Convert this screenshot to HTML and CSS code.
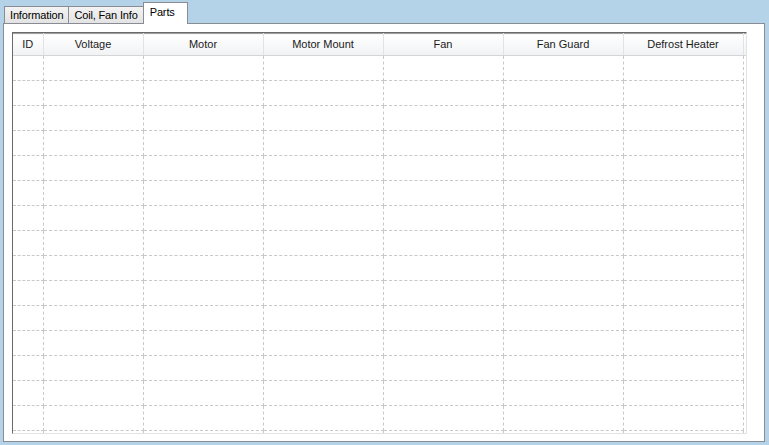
FILE: index.html
```html
<!DOCTYPE html>
<html>
<head>
<meta charset="utf-8">
<link rel="stylesheet" href="styles.css">
</head>
<body>
<div class="window">
  <div class="tabs">
    <div class="tab">Information</div>
    <div class="tab">Coil, Fan Info</div>
    <div class="tab active">Parts</div>
  </div>
  <div class="panel">
    <div class="grid">
      <table>
        <colgroup>
          <col class="c-id"><col class="c-volt"><col class="c-w"><col class="c-w"><col class="c-w"><col class="c-w"><col class="c-w"><col>
        </colgroup>
        <thead>
          <tr>
            <th>ID</th><th>Voltage</th><th>Motor</th><th>Motor Mount</th><th>Fan</th><th>Fan Guard</th><th>Defrost Heater</th><th class="filler"></th>
          </tr>
        </thead>
        <tbody id="rows"></tbody>
      </table>
    </div>
  </div>
</div>
<script>
  var tb = document.getElementById('rows');
  for (var i = 0; i < 16; i++) {
    var tr = document.createElement('tr');
    for (var j = 0; j < 7; j++) tr.appendChild(document.createElement('td'));
    var f = document.createElement('td'); f.className = 'filler'; tr.appendChild(f);
    tb.appendChild(tr);
  }
</script>
</body>
</html>
```
FILE: styles.css
```css
html, body {
  margin: 0;
  padding: 0;
}
body {
  background: #b4d3e8;
  font-family: "Liberation Sans", Arial, sans-serif;
  font-size: 11px;
  color: #000;
  width: 769px;
  height: 445px;
  overflow: hidden;
}
.window {
  padding: 2px 0 0 3px;
}
.tabs {
  display: flex;
  align-items: flex-end;
  height: 21px;
  padding-left: 1px;
  position: relative;
  z-index: 1;
}
.tab {
  height: 16px;
  line-height: 17px;
  padding: 0 5px 0 5px;
  letter-spacing: -0.15px;
  border: 1px solid #898c95;
  border-bottom: none;
  background: linear-gradient(#f3f3f3, #e3e3e3);
  margin-right: -1px;
  color: #000;
}
.tab.active {
  height: 21px;
  line-height: 19px;
  padding: 0 12px 0 6px;
  background: #fff;
  margin-bottom: -1px;
}
.panel {
  width: 752px;
  height: 409px;
  border: 1px solid #898c95;
  background: #fff;
  padding: 8px 0 0 8px;
}
.grid {
  width: 733px;
  height: 400px;
  border-top: 1px solid #696969;
  border-left: 1px solid #696969;
  border-right: 1px solid #e3e3e3;
  border-bottom: 1px solid #e3e3e3;
  overflow: hidden;
  background: #fff;
}
table {
  border-collapse: collapse;
  table-layout: fixed;
  width: 733px;
}
.c-id { width: 30px; }
.c-volt { width: 100px; }
.c-w { width: 120px; }
th {
  height: 21px;
  padding: 0;
  line-height: 21px;
  font-weight: normal;
  text-align: center;
  vertical-align: top;
  color: #1a1a1a;
  background: linear-gradient(#ffffff, #f1f2f4);
  border-right: 1px solid #e2e3e6;
  border-bottom: 1px solid #d5d5d5;
  border-top: 1px solid #a0a0a0;
}
th.filler {
  border-right: none;
}
td {
  height: 24px;
  padding: 0;
  border-right: 1px dashed #c8c8c8;
  border-bottom: 1px dashed #c8c8c8;
}
td.filler {
  border: none;
}
```
